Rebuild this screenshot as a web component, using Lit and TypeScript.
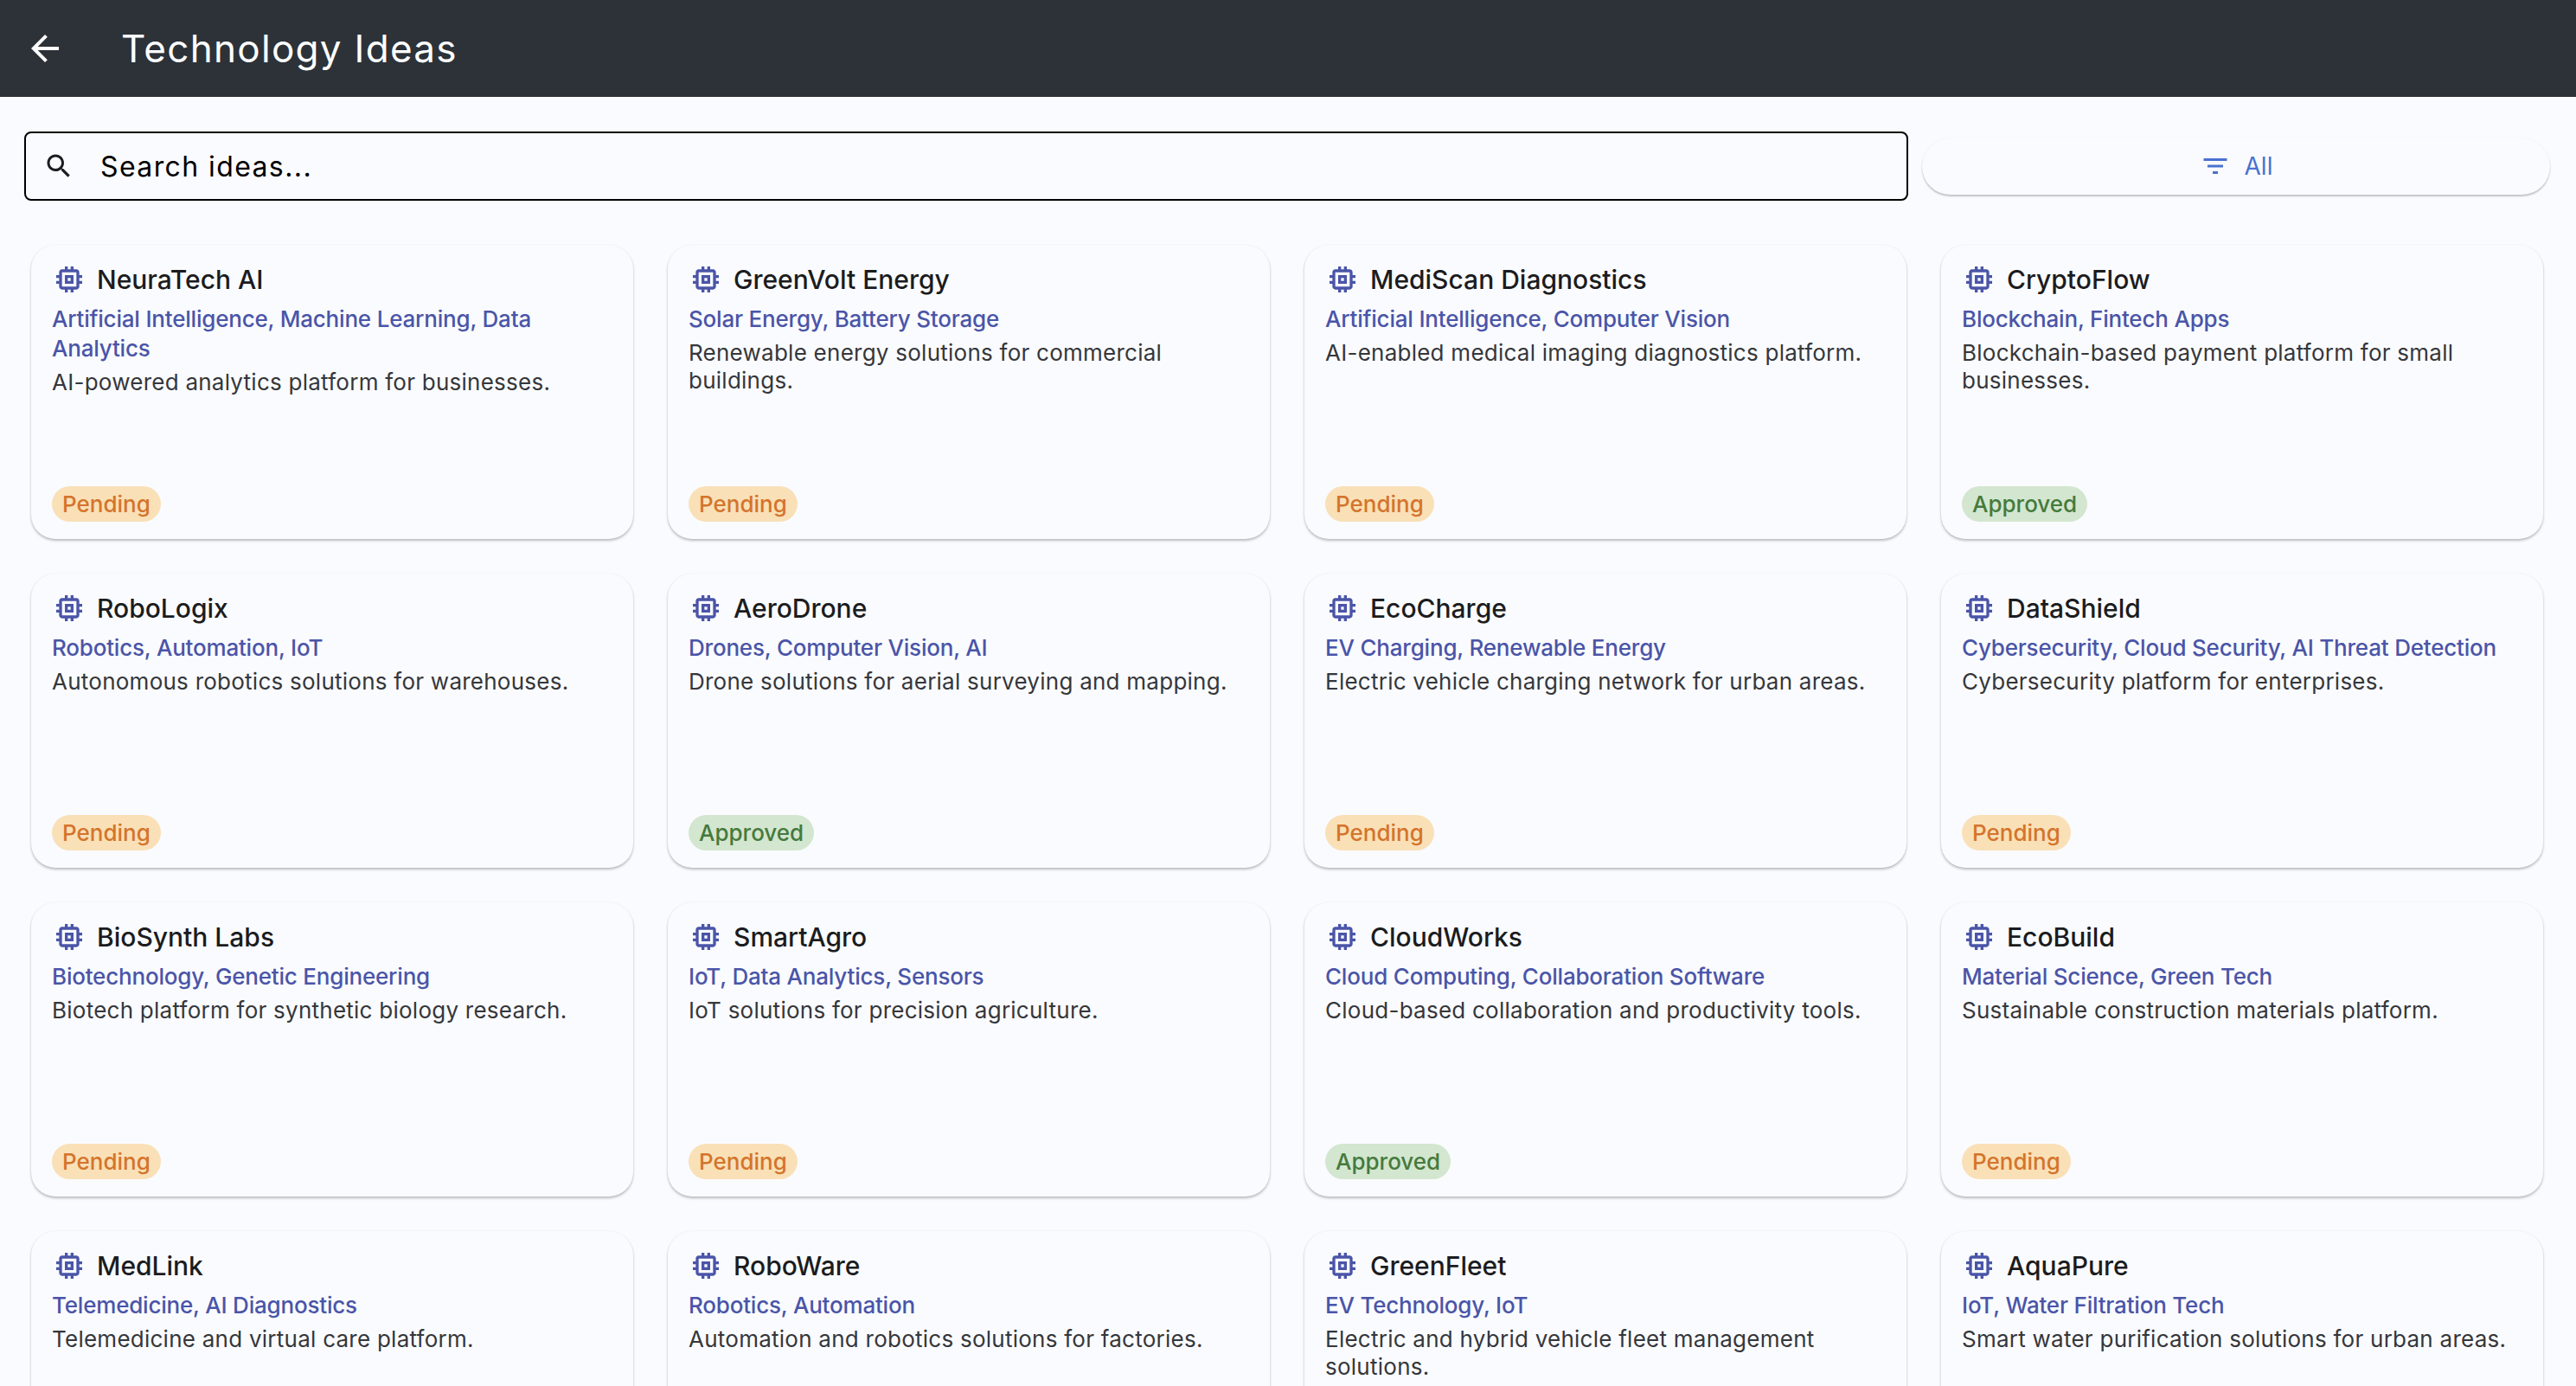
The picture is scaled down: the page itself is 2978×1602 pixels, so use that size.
import { LitElement, html, css } from 'lit';
import { customElement } from 'lit/decorators.js';

type Idea = { name: string; tags: string; desc: string; status?: 'Pending' | 'Approved' };

// the last row runs off the bottom of the window, its status is not visible
const IDEAS: Idea[] = [
  { name: 'NeuraTech AI', tags: 'Artificial Intelligence, Machine Learning, Data Analytics', desc: 'AI-powered analytics platform for businesses.', status: 'Pending' },
  { name: 'GreenVolt Energy', tags: 'Solar Energy, Battery Storage', desc: 'Renewable energy solutions for commercial buildings.', status: 'Pending' },
  { name: 'MediScan Diagnostics', tags: 'Artificial Intelligence, Computer Vision', desc: 'AI-enabled medical imaging diagnostics platform.', status: 'Pending' },
  { name: 'CryptoFlow', tags: 'Blockchain, Fintech Apps', desc: 'Blockchain-based payment platform for small businesses.', status: 'Approved' },
  { name: 'RoboLogix', tags: 'Robotics, Automation, IoT', desc: 'Autonomous robotics solutions for warehouses.', status: 'Pending' },
  { name: 'AeroDrone', tags: 'Drones, Computer Vision, AI', desc: 'Drone solutions for aerial surveying and mapping.', status: 'Approved' },
  { name: 'EcoCharge', tags: 'EV Charging, Renewable Energy', desc: 'Electric vehicle charging network for urban areas.', status: 'Pending' },
  { name: 'DataShield', tags: 'Cybersecurity, Cloud Security, AI Threat Detection', desc: 'Cybersecurity platform for enterprises.', status: 'Pending' },
  { name: 'BioSynth Labs', tags: 'Biotechnology, Genetic Engineering', desc: 'Biotech platform for synthetic biology research.', status: 'Pending' },
  { name: 'SmartAgro', tags: 'IoT, Data Analytics, Sensors', desc: 'IoT solutions for precision agriculture.', status: 'Pending' },
  { name: 'CloudWorks', tags: 'Cloud Computing, Collaboration Software', desc: 'Cloud-based collaboration and productivity tools.', status: 'Approved' },
  { name: 'EcoBuild', tags: 'Material Science, Green Tech', desc: 'Sustainable construction materials platform.', status: 'Pending' },
  { name: 'MedLink', tags: 'Telemedicine, AI Diagnostics', desc: 'Telemedicine and virtual care platform.' },
  { name: 'RoboWare', tags: 'Robotics, Automation', desc: 'Automation and robotics solutions for factories.' },
  { name: 'GreenFleet', tags: 'EV Technology, IoT', desc: 'Electric and hybrid vehicle fleet management solutions.' },
  { name: 'AquaPure', tags: 'IoT, Water Filtration Tech', desc: 'Smart water purification solutions for urban areas.' },
];

const chip = html`<svg class="chip" viewBox="0 0 24 24"><path d="M15 9H9v6h6V9zm-2 4h-2v-2h2v2zm8-2V9h-2V7c0-1.1-.9-2-2-2h-2V3h-2v2h-2V3H9v2H7c-1.1 0-2 .9-2 2v2H3v2h2v2H3v2h2v2c0 1.1.9 2 2 2h2v2h2v-2h2v2h2v-2h2c1.1 0 2-.9 2-2v-2h2v-2h-2v-2h2zm-4 6H7V7h10v10z"/></svg>`;

@customElement('app-root')
export class AppRoot extends LitElement {
  static styles = css`
    :host {
      display: block;
      height: 100vh;
      overflow: hidden;
      background: #fafbfe;
      font-family: Inter, "Noto Sans", sans-serif;
      color: #1b1c20;
    }
    svg { display: block; fill: currentColor; flex: none; }

    .bar {
      height: 112px;
      background: #2c3238;
      color: #fff;
      display: flex;
      align-items: center;
      padding-left: 28px;
    }
    .bar svg { width: 48px; height: 48px; }
    .bar h1 {
      margin: 0 0 0 64px;
      font-size: 44px;
      font-weight: 400;
      letter-spacing: 1.3px;
    }

    .tools {
      display: flex;
      align-items: center;
      gap: 16px;
      padding: 40px 30px 0 28px;
    }
    .search {
      flex: none;
      width: 2178px;
      height: 80px;
      box-sizing: border-box;
      border: 2px solid #000;
      border-radius: 8px;
      display: flex;
      align-items: center;
      padding-left: 20px;
      gap: 30px;
    }
    .search svg { width: 36px; height: 36px; }
    .search input {
      flex: 1;
      border: 0;
      outline: 0;
      background: none;
      padding: 0;
      font: inherit;
      font-size: 32px;
      letter-spacing: 1.4px;
      color: #000;
    }
    .search input::placeholder { color: #000; opacity: 1; }
    .filter {
      flex: 1;
      height: 65px;
      border: 0;
      border-radius: 33px;
      background: #fafbfe;
      box-shadow: 0 2px 2px rgba(0, 0, 0, .22), 0 0 2px rgba(0, 0, 0, .05);
      display: flex;
      align-items: center;
      justify-content: center;
      gap: 16px;
      font: inherit;
      font-size: 28px;
      color: #4a72d0;
    }
    .filter svg { width: 36px; height: 36px; }

    .grid {
      display: grid;
      grid-template-columns: repeat(4, 696px);
      grid-auto-rows: 340px;
      column-gap: 40px;
      row-gap: 40px;
      padding: 51px 0 0 36px;
    }
    .card {
      box-sizing: border-box;
      border-radius: 28px;
      background: #fafbfe;
      box-shadow: 0 2px 3px rgba(0, 0, 0, .25), 0 0 2px rgba(0, 0, 0, .06);
      padding: 20px 24px;
      display: flex;
      flex-direction: column;
    }
    .head { display: flex; align-items: center; gap: 12px; height: 40px; }
    .chip { width: 40px; height: 40px; color: #4a55a8; }
    .name { font-size: 30px; font-weight: 500; }
    .tags {
      margin-top: 9px;
      font-size: 26px;
      line-height: 34px;
      font-weight: 500;
      letter-spacing: -0.2px;
      color: #4a55a8;
    }
    .desc {
      margin-top: 6px;
      font-size: 26px;
      line-height: 32px;
      letter-spacing: 0.25px;
      color: #35373b;
    }
    .badge {
      margin-top: auto;
      align-self: flex-start;
      height: 41px;
      line-height: 41px;
      padding: 0 12px;
      border-radius: 21px;
      font-size: 26px;
      font-weight: 500;
    }
    .Pending { background: #f9e0b7; color: #d4742b; }
    .Approved { background: #d3e6cf; color: #457a3d; }
  `;

  render() {
    return html`
      <header class="bar">
        <svg viewBox="0 0 24 24"><path d="M20 11H7.83l5.59-5.59L12 4l-8 8 8 8 1.41-1.41L7.83 13H20v-2z"/></svg>
        <h1>Technology Ideas</h1>
      </header>
      <div class="tools">
        <label class="search">
          <svg viewBox="0 0 24 24"><path d="M15.5 14h-.79l-.28-.27C15.41 12.59 16 11.11 16 9.5 16 5.91 13.09 3 9.5 3S3 5.91 3 9.5 5.91 16 9.5 16c1.61 0 3.09-.59 4.23-1.57l.27.28v.79l5 4.99L20.49 19l-4.99-5zm-6 0C7.01 14 5 11.99 5 9.5S7.01 5 9.5 5 14 7.01 14 9.5 11.99 14 9.5 14z"/></svg>
          <input placeholder="Search ideas..." />
        </label>
        <button class="filter">
          <svg viewBox="0 0 24 24"><path d="M10 18h4v-2h-4v2zM3 6v2h18V6H3zm3 7h12v-2H6v2z"/></svg>
          All
        </button>
      </div>
      <main class="grid">
        ${IDEAS.map((idea) => html`
          <article class="card">
            <div class="head">${chip}<span class="name">${idea.name}</span></div>
            <div class="tags">${idea.tags}</div>
            <div class="desc">${idea.desc}</div>
            ${idea.status ? html`<span class="badge ${idea.status}">${idea.status}</span>` : ''}
          </article>
        `)}
      </main>
    `;
  }
}
